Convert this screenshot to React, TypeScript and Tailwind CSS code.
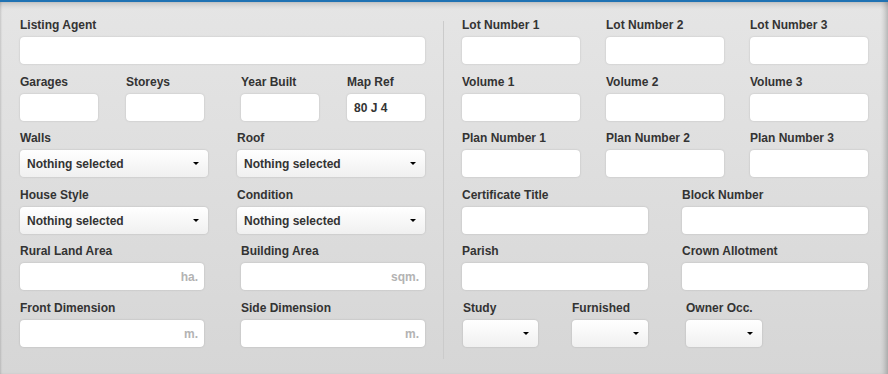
import React from 'react';

const font = { fontFamily: '"Liberation Sans", Arial, sans-serif' };

function Label({ children }: { children: React.ReactNode }) {
    return <div className="text-[12px] leading-[14px] font-bold text-[#333] mb-[5px] whitespace-nowrap">{children}</div>;
}

function TextInput({ value, unit, className = '' }: { value?: string; unit?: string; className?: string }) {
    return (
        <div
            className={`h-[27px] bg-white rounded-[4px] shadow-[0_0_2px_rgba(0,0,0,0.18)] flex items-center px-[7px] text-[12px] ${className}`}
        >
            {value && <span className="font-bold text-[#333]">{value}</span>}
            {unit && <span className="ml-auto -mr-[1px] font-bold text-[#b3b3b3]">{unit}</span>}
        </div>
    );
}

function Select({ text, className = '' }: { text?: string; className?: string }) {
    return (
        <div
            className={`h-[27px] rounded-[4px] bg-gradient-to-b from-white to-[#f0f0f0] shadow-[0_0_2px_rgba(0,0,0,0.2)] flex items-center pl-[7px] pr-[9px] text-[12px] ${className}`}
        >
            {text && <span className="font-bold text-[#333]">{text}</span>}
            <span className="ml-auto w-0 h-0 border-l-[3px] border-r-[3px] border-t-[3px] border-l-transparent border-r-transparent border-t-black" />
        </div>
    );
}

function Field({ label, children, className = '' }: { label: string; children: React.ReactNode; className?: string }) {
    return (
        <div className={className}>
            <Label>{label}</Label>
            {children}
        </div>
    );
}

export default function App() {
    return (
        <div style={font} className="w-[888px] h-[374px] overflow-hidden">
            <div className="h-full border-t-2 border-t-[#1f72b3] bg-gradient-to-b from-[#e5e5e5] to-[#d6d6d6] shadow-[inset_0_6px_6px_-4px_rgba(0,0,0,0.18),inset_2px_0_2px_-1px_rgba(0,0,0,0.12),inset_-6px_0_5px_-3px_rgba(0,0,0,0.2)] flex pt-[16px] pl-[20px]">
                {/* left column */}
                <div className="w-[405px] flex flex-col gap-[11px]">
                    <Field label="Listing Agent">
                        <TextInput />
                    </Field>
                    <div className="flex justify-between">
                        <div className="w-[184px] flex justify-between">
                            <Field label="Garages" className="w-[78px]">
                                <TextInput />
                            </Field>
                            <Field label="Storeys" className="w-[78px]">
                                <TextInput />
                            </Field>
                        </div>
                        <div className="w-[184px] flex justify-between">
                            <Field label="Year Built" className="w-[78px]">
                                <TextInput />
                            </Field>
                            <Field label="Map Ref" className="w-[78px]">
                                <TextInput value="80 J 4" />
                            </Field>
                        </div>
                    </div>
                    <div className="flex justify-between -mt-[1px]">
                        <Field label="Walls" className="w-[188px]">
                            <Select text="Nothing selected" />
                        </Field>
                        <Field label="Roof" className="w-[188px]">
                            <Select text="Nothing selected" />
                        </Field>
                    </div>
                    <div className="flex justify-between">
                        <Field label="House Style" className="w-[188px]">
                            <Select text="Nothing selected" />
                        </Field>
                        <Field label="Condition" className="w-[188px]">
                            <Select text="Nothing selected" />
                        </Field>
                    </div>
                    <div className="flex justify-between -mt-[1px]">
                        <Field label="Rural Land Area" className="w-[184px]">
                            <TextInput unit="ha." />
                        </Field>
                        <Field label="Building Area" className="w-[184px]">
                            <TextInput unit="sqm." />
                        </Field>
                    </div>
                    <div className="flex justify-between">
                        <Field label="Front Dimension" className="w-[184px]">
                            <TextInput unit="m." />
                        </Field>
                        <Field label="Side Dimension" className="w-[184px]">
                            <TextInput unit="m." />
                        </Field>
                    </div>
                </div>

                {/* divider */}
                <div className="mx-[18px] mt-[3px] w-px h-[338px] bg-[#cbcbcb]" />

                {/* right column */}
                <div className="w-[406px] flex flex-col gap-[11px]">
                    <div className="flex justify-between">
                        <Field label="Lot Number 1" className="w-[118px]"><TextInput /></Field>
                        <Field label="Lot Number 2" className="w-[118px]"><TextInput /></Field>
                        <Field label="Lot Number 3" className="w-[118px]"><TextInput /></Field>
                    </div>
                    <div className="flex justify-between">
                        <Field label="Volume 1" className="w-[118px]"><TextInput /></Field>
                        <Field label="Volume 2" className="w-[118px]"><TextInput /></Field>
                        <Field label="Volume 3" className="w-[118px]"><TextInput /></Field>
                    </div>
                    <div className="flex justify-between -mt-[1px]">
                        <Field label="Plan Number 1" className="w-[118px]"><TextInput /></Field>
                        <Field label="Plan Number 2" className="w-[118px]"><TextInput /></Field>
                        <Field label="Plan Number 3" className="w-[118px]"><TextInput /></Field>
                    </div>
                    <div className="flex justify-between">
                        <Field label="Certificate Title" className="w-[186px]"><TextInput /></Field>
                        <Field label="Block Number" className="w-[186px]"><TextInput /></Field>
                    </div>
                    <div className="flex justify-between -mt-[1px]">
                        <Field label="Parish" className="w-[186px]"><TextInput /></Field>
                        <Field label="Crown Allotment" className="w-[186px]"><TextInput /></Field>
                    </div>
                    <div className="flex">
                        <Field label="Study" className="w-[76px] pl-[1px]"><Select /></Field>
                        <Field label="Furnished" className="w-[76px] ml-[34px]"><Select /></Field>
                        <Field label="Owner Occ." className="w-[76px] ml-[38px]"><Select /></Field>
                    </div>
                </div>
            </div>
        </div>
    );
}
